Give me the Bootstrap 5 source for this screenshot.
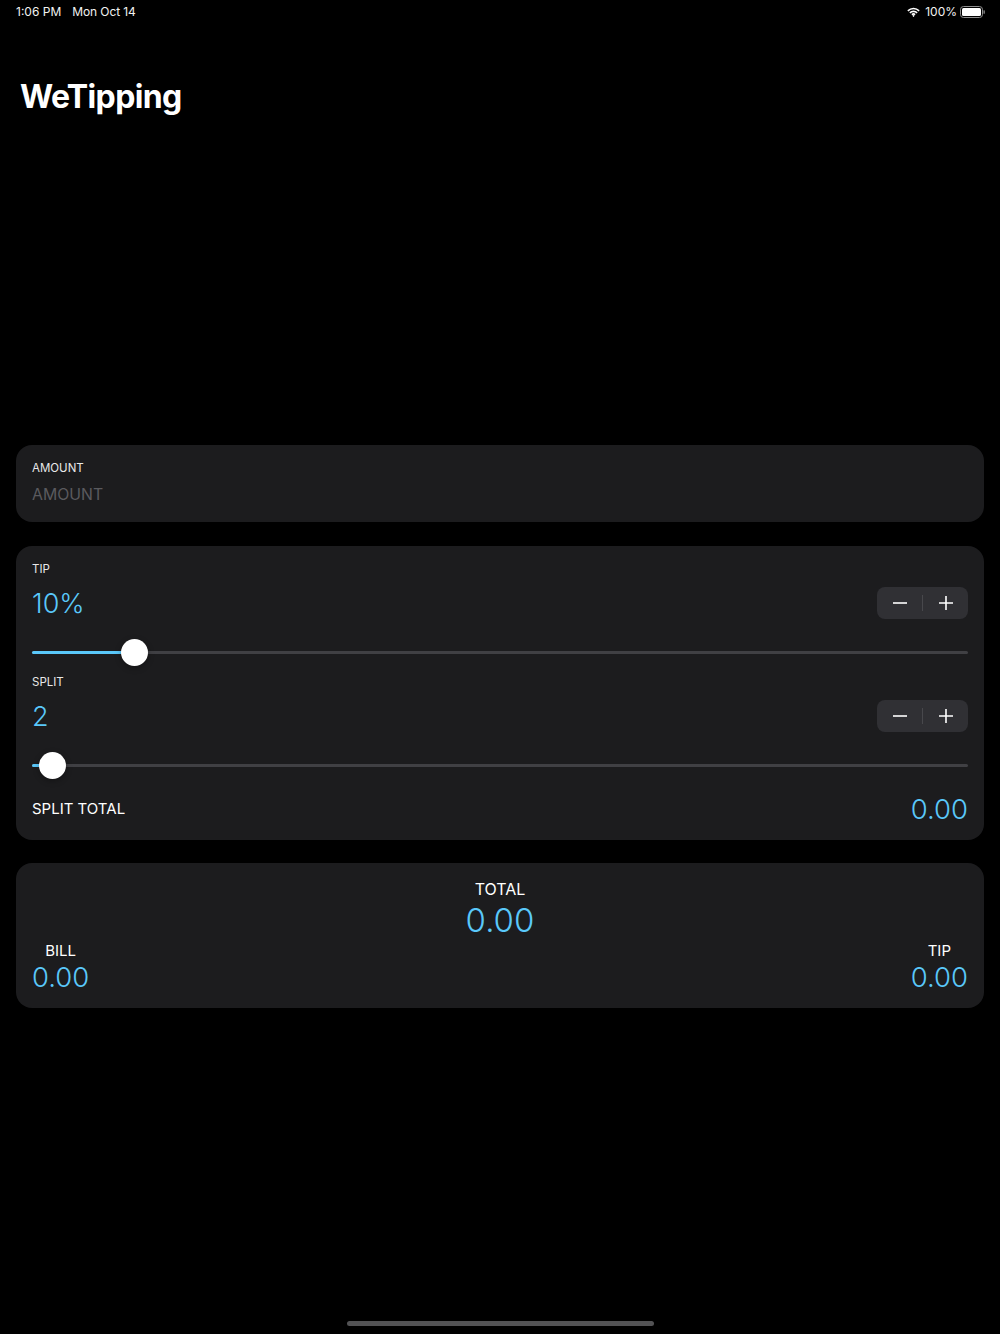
<!DOCTYPE html>
<html lang="en">
<head>
  <meta charset="UTF-8" />
  <meta name="viewport" content="width=device-width, initial-scale=1.0" />
  <title>WeTipping</title>
  <link rel="stylesheet" href="https://cdn.jsdelivr.net/npm/bootstrap@5.3.0/dist/css/bootstrap.min.css">
  <style>
    body { background: #000; color: #fff; font-family: Inter, "Liberation Sans", sans-serif; height: 1334px; overflow: hidden; }
    .app-shell { height: 1334px; }
    .status-bar { height: 24px; padding: 0 15px 0 16px; font-size: 12px; color: #f2f2f2; }
    .status-left { gap: 11px; }
    .status-date { letter-spacing: -.1px; }
    .status-right { gap: 3px; }
    .status-wifi { margin-right: 2px; }
    .app-title { font-size: 32px; font-weight: 700; line-height: 41px; margin: 52px 0 0 20px; letter-spacing: -.65px; }
    .panel-stack { margin: 328px 16px 0; gap: 24px; }
    .panel { background: #1c1c1e; border-radius: 16px; padding: 0 16px; }
    .panel-amount { height: 77px; padding-top: 15px; }
    .panel-tip { height: 294px; padding-top: 15px; margin-bottom: -1px; }
    .panel-total { height: 145px; padding-top: 16px; }
    .field-label { font-size: 11.5px; line-height: 16px; color: #e8e8e8; }
    .amount-hint { font-size: 15.8px; line-height: 22px; color: #5a5a5e; margin-top: 8px; }
    .value-line { height: 36px; margin-top: 8px; }
    .value-text { font-size: 27.5px; line-height: 32px; color: #5ac8fa; font-weight: 300; }
    .value-line .value-text { font-size: 27px; line-height: 34px; padding-top: 2px; }
    .value-big { font-size: 33px; line-height: 40px; margin: 1px 0; display: block; }
    .stepper { width: 91px; height: 32px; background: #303034; border-radius: 8px; }
    .stepper-half { flex: 1; }
    .stepper-sep { width: 1px; height: 16px; background: #48484c; }
    .slider-track { height: 3px; background: #404044; border-radius: 2px; margin-top: 30px; }
    .slider-fill { height: 3px; background: #5ac8fa; border-radius: 2px; }
    .slider-knob { width: 27px; height: 27px; background: #fff; border-radius: 50%; top: -12px; margin-left: -13.5px; box-shadow: 0 2px 6px rgba(0,0,0,.3); }
    .slider-gap { height: 20px; }
    .split-total { margin-top: 26px; }
    .caption-text { font-size: 16px; line-height: 20px; }
    .caption-small { font-size: 15px; }
    .home-bar { width: 307px; height: 5px; background: #525254; border-radius: 3px; margin: 0 auto 8px; }
  </style>
</head>
<body>
  <div class="app-shell d-flex flex-column">
    <div class="status-bar d-flex justify-content-between align-items-center">
      <div class="status-left d-flex"><span>1:06 PM</span><span class="status-date">Mon Oct 14</span></div>
      <div class="status-right d-flex align-items-center">
        <svg class="status-wifi" width="13" height="10" viewBox="0 0 15 11" fill="none" stroke="#fff" stroke-width="1.8">
          <path d="M1 4.2a9.2 9.2 0 0 1 13 0" />
          <path d="M3.3 6.5a6 6 0 0 1 8.4 0" />
          <path d="M5.6 8.6a2.8 2.8 0 0 1 3.8 0" />
          <circle cx="7.5" cy="9.9" r=".7" fill="#fff" stroke-width="1" />
        </svg>
        <span>100%</span>
        <svg width="25" height="12" viewBox="0 0 25 12">
          <rect x=".5" y=".5" width="22" height="11" rx="3" fill="none" stroke="#8e8e8e" />
          <rect x="2" y="2" width="19" height="8" rx="1.5" fill="#fff" />
          <rect x="23.5" y="4.2" width="1.3" height="3.6" rx=".6" fill="#8e8e8e" />
        </svg>
      </div>
    </div>

    <h1 class="app-title">WeTipping</h1>

    <div class="panel-stack d-flex flex-column">
      <!-- amount -->
      <div class="panel panel-amount">
        <div class="field-label">AMOUNT</div>
        <div class="amount-hint">AMOUNT</div>
      </div>

      <!-- tip and split -->
      <div class="panel panel-tip">
        <div class="field-label">TIP</div>
        <div class="value-line d-flex justify-content-between align-items-center">
          <span class="value-text">10%</span>
          <div class="stepper d-flex align-items-center">
            <div class="stepper-half d-flex justify-content-center">
              <svg width="14" height="14" viewBox="0 0 14 14" stroke="#fff" stroke-width="1.6"><path d="M0 7h14" /></svg>
            </div>
            <div class="stepper-sep"></div>
            <div class="stepper-half d-flex justify-content-center">
              <svg width="14" height="14" viewBox="0 0 14 14" stroke="#fff" stroke-width="1.6"><path d="M0 7h14M7 0v14" /></svg>
            </div>
          </div>
        </div>
        <div class="slider-track position-relative">
          <div class="slider-fill" style="width: 11%"></div>
          <div class="slider-knob position-absolute" style="left: 11%"></div>
        </div>
        <div class="slider-gap"></div>
        <div class="field-label">SPLIT</div>
        <div class="value-line d-flex justify-content-between align-items-center">
          <span class="value-text">2</span>
          <div class="stepper d-flex align-items-center">
            <div class="stepper-half d-flex justify-content-center">
              <svg width="14" height="14" viewBox="0 0 14 14" stroke="#fff" stroke-width="1.6"><path d="M0 7h14" /></svg>
            </div>
            <div class="stepper-sep"></div>
            <div class="stepper-half d-flex justify-content-center">
              <svg width="14" height="14" viewBox="0 0 14 14" stroke="#fff" stroke-width="1.6"><path d="M0 7h14M7 0v14" /></svg>
            </div>
          </div>
        </div>
        <div class="slider-track position-relative">
          <div class="slider-fill" style="width: 2.2%"></div>
          <div class="slider-knob position-absolute" style="left: 2.2%"></div>
        </div>
        <div class="split-total d-flex justify-content-between align-items-center">
          <span class="caption-text caption-small">SPLIT TOTAL</span>
          <span class="value-text">0.00</span>
        </div>
      </div>

      <!-- totals -->
      <div class="panel panel-total">
        <div class="text-center">
          <div class="caption-text">TOTAL</div>
          <div class="value-text value-big">0.00</div>
        </div>
        <div class="d-flex justify-content-between">
          <div class="text-center">
            <div class="caption-text caption-small">BILL</div>
            <div class="value-text">0.00</div>
          </div>
          <div class="text-center">
            <div class="caption-text caption-small">TIP</div>
            <div class="value-text">0.00</div>
          </div>
        </div>
      </div>
    </div>

    <div class="home-bar mt-auto"></div>
  </div>
</body>
</html>
